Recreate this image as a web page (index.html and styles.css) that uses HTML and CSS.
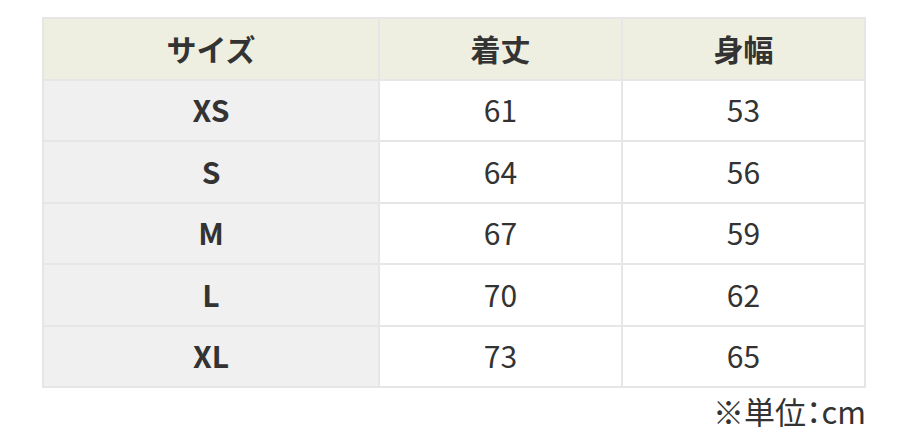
FILE: index.html
```html
<!DOCTYPE html>
<html lang="ja">
<head>
<meta charset="utf-8">
<link rel="stylesheet" href="styles.css">
</head>
<body>
<div class="wrap">
  <div class="table">
    <div class="cell head">サイズ</div>
    <div class="cell head">着丈</div>
    <div class="cell head">身幅</div>

    <div class="cell label">XS</div>
    <div class="cell">61</div>
    <div class="cell">53</div>

    <div class="cell label">S</div>
    <div class="cell">64</div>
    <div class="cell">56</div>

    <div class="cell label">M</div>
    <div class="cell">67</div>
    <div class="cell">59</div>

    <div class="cell label">L</div>
    <div class="cell">70</div>
    <div class="cell">62</div>

    <div class="cell label">XL</div>
    <div class="cell">73</div>
    <div class="cell">65</div>
  </div>
  <p class="note">※単位：cm</p>
</div>
</body>
</html>
```
FILE: styles.css
```css
html, body {
  margin: 0;
  padding: 0;
  background: #ffffff;
}
body {
  font-family: "Noto Sans CJK JP", "Noto Sans", sans-serif;
  color: #333333;
}
.wrap {
  width: 824px;
  padding: 17px 0 0 42px;
}
.table {
  display: grid;
  grid-template-columns: 334px 241px 241px;
  grid-template-rows: 60px 59px 60px 59px 60px 59px;
  gap: 2px;
  padding: 2px;
  background: #e6e6e6;
  width: 824px;
  box-sizing: border-box;
}
.cell {
  display: flex;
  align-items: center;
  justify-content: center;
  background: #ffffff;
  font-size: 30px;
  font-weight: 400;
  line-height: 1;
  padding-bottom: 3px;
}
.head {
  background: #efefe1;
  font-weight: 700;
}
.label {
  background: #f0f0f0;
  font-weight: 700;
}
.note {
  margin: 7px 0 0;
  text-align: right;
  font-size: 31px;
  line-height: 32px;
  font-feature-settings: "palt";
}
```
